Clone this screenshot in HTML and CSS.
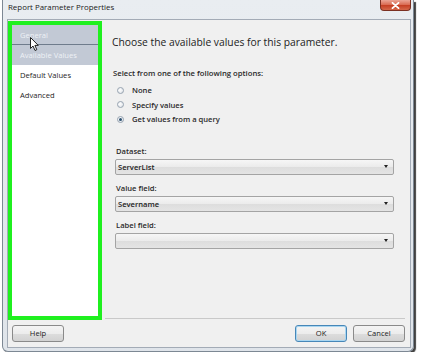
FILE: index.html
```html
<!DOCTYPE html>
<html>
<head>
<meta charset="utf-8">
<link rel="stylesheet" href="styles.css">
</head>
<body>
<div class="window">
  <div class="titlebar">
    <span class="title">Report Parameter Properties</span>
    <span class="close"><svg width="9" height="7" viewBox="0 0 9 7"><path d="M1.5 0.8 L7.5 6.2 M7.5 0.8 L1.5 6.2" stroke="#fff" stroke-width="1.8" stroke-linecap="round"/></svg></span>
  </div>
  <div class="client">
    <div class="main">
      <div class="sidebar">
        <div class="item sel first">General</div>
        <div class="item sel">Available Values</div>
        <div class="item">Default Values</div>
        <div class="item">Advanced</div>
        <svg class="cursor" width="10" height="15" viewBox="0 0 10 15"><path d="M0.5 0.5 L0.5 11.5 L3 9 L5 13.5 L6.8 12.7 L4.9 8.4 L8.3 8.4 Z" fill="#fff" stroke="#222" stroke-width="1" stroke-linejoin="round"/></svg>
      </div>
      <div class="content">
        <h1 class="heading">Choose the available values for this parameter.</h1>
        <div class="optlabel">Select from one of the following options:</div>
        <div class="radios">
          <div class="radio"><span class="circle"></span>None</div>
          <div class="radio"><span class="circle"></span>Specify values</div>
          <div class="radio"><span class="circle on"></span>Get values from a query</div>
        </div>
        <div class="field">
          <div class="flabel">Dataset:</div>
          <div class="select"><span class="val">ServerList</span><span class="arrow"></span></div>
        </div>
        <div class="field">
          <div class="flabel">Value field:</div>
          <div class="select"><span class="val">Severname</span><span class="arrow"></span></div>
        </div>
        <div class="field">
          <div class="flabel">Label field:</div>
          <div class="select"><span class="val"></span><span class="arrow"></span></div>
        </div>
      </div>
    </div>
    <div class="footer">
      <div class="btn">Help</div>
      <div class="spacer"></div>
      <div class="btn ok">OK</div>
      <div class="btn">Cancel</div>
    </div>
  </div>
</div>
</body>
</html>
```

FILE: styles.css
```css
html, body {
  margin: 0;
  padding: 0;
  background: #ffffff;
}
body {
  font-family: "Open Sans", "Noto Sans", sans-serif;
  color: #1e1e1e;
}
.window {
  margin-left: 2px;
  width: 410px;
  height: 351px;
  border: 1px solid #7d8894;
  border-top: none;
  border-radius: 0 0 6px 6px;
  background: linear-gradient(#e9edf1, #dfe4ea);
  box-shadow: 2px 2px 1px rgba(0,0,0,0.75);
  display: flex;
  flex-direction: column;
}
.titlebar {
  height: 19px;
  display: flex;
  align-items: flex-start;
  padding-left: 5px;
}
.title {
  font-size: 7.9px;
  line-height: 14px;
  color: #1b1b1b;
}
.close {
  margin-left: auto;
  margin-right: 2px;
  width: 31px;
  height: 11px;
  box-sizing: border-box;
  border: 1px solid #7b3022;
  border-top: none;
  border-radius: 0 0 4px 4px;
  background: linear-gradient(#eba596, #d9684f 50%, #c43d22 51%, #d5674a);
  display: flex;
  align-items: center;
  justify-content: center;
}
.close svg { display: block; }
.client {
  margin: 0 2px 3px 4px;
  flex: 1;
  border: 1px solid #a3abb6;
  background: #f0f0f0;
  display: flex;
  flex-direction: column;
}
.main {
  height: 300px;
  display: flex;
}
.sidebar {
  position: relative;
  margin-top: 1px;
  width: 94px;
  box-sizing: border-box;
  border: 4px solid #1ff01f;
  background: #ffffff;
  flex-shrink: 0;
}
.item {
  height: 20px;
  line-height: 20px;
  padding-left: 8px;
  font-size: 7.6px;
  color: #1e1e1e;
  box-sizing: border-box;
}
.item.sel {
  background: #c2c9d5;
  color: #eef1f5;
}
.item.first {
  border-bottom: 1px solid #6f7c8c;
}
.cursor {
  position: absolute;
  left: 18px;
  top: 12px;
}
.content {
  flex: 1;
  margin: 0 5px 1px 3px;
  border-bottom: 1px solid #c9c9c9;
  display: flex;
  flex-direction: column;
}
.heading {
  margin: 15px 0 0 7px;
  font-size: 10.3px;
  line-height: 14px;
  font-weight: normal;
  color: #222;
}
.optlabel {
  margin: 19px 0 0 8px;
  font-size: 7.7px;
  line-height: 10px;
  font-weight: 600;
  color: #2a2a2a;
}
.radios {
  margin-top: 5px;
  display: flex;
  flex-direction: column;
}
.radio {
  height: 14.5px;
  display: flex;
  align-items: center;
  padding-left: 12px;
  font-size: 7.6px;
  font-weight: 600;
  color: #2a2a2a;
}
.circle {
  width: 7px;
  height: 7px;
  box-sizing: border-box;
  border: 1px solid #97a3b0;
  border-radius: 50%;
  background: radial-gradient(circle at 40% 40%, #ffffff, #d9dee4);
  margin-right: 8px;
  display: flex;
  align-items: center;
  justify-content: center;
}
.circle.on::after {
  content: "";
  width: 3px;
  height: 3px;
  border-radius: 50%;
  background: #2e5070;
}
.field {
  display: flex;
  flex-direction: column;
  margin-top: 8px;
}
.radios + .field { margin-top: 19px; }
.flabel {
  margin-left: 11px;
  font-size: 7.6px;
  line-height: 10px;
  font-weight: 600;
  color: #2a2a2a;
}
.select {
  margin: 3px 0 0 10px;
  width: 279px;
  height: 16px;
  box-sizing: border-box;
  border: 1px solid #a4a4a4;
  border-radius: 2px;
  background: linear-gradient(#f6f6f6, #ebebeb 50%, #dddddd 51%, #e4e4e4);
  display: flex;
  align-items: center;
  padding: 0 5px 0 2px;
}
.val {
  flex: 1;
  font-size: 7.6px;
  font-weight: 600;
  color: #222;
}
.arrow {
  width: 0;
  height: 0;
  border-left: 2.5px solid transparent;
  border-right: 2.5px solid transparent;
  border-top: 3px solid #222;
}
.footer {
  flex: 1;
  display: flex;
  align-items: flex-start;
  padding: 5px 5px 0 4px;
  gap: 6px;
}
.spacer { flex: 1; }
.btn {
  width: 52px;
  height: 17px;
  box-sizing: border-box;
  border: 1px solid #8a8a8a;
  border-radius: 3px;
  background: linear-gradient(#f4f4f4, #ececec 50%, #dddddd 51%, #d2d2d2);
  font-size: 7.6px;
  line-height: 15px;
  text-align: center;
  color: #222;
}
.btn.ok {
  border-color: #4787b8;
  box-shadow: inset 0 0 0 1px #a9d6f1;
}
```
